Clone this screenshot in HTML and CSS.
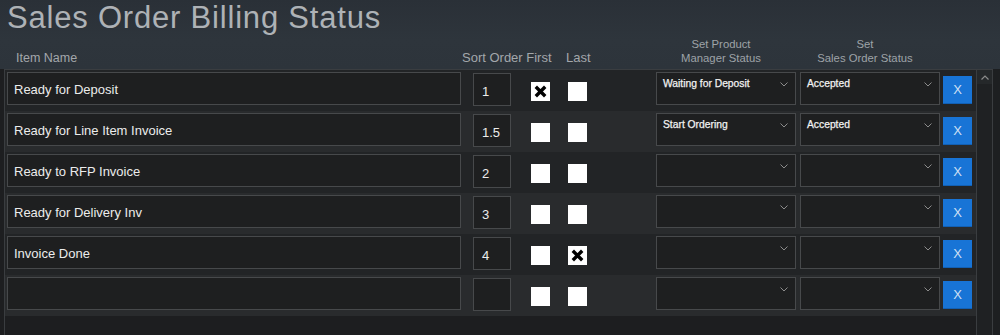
FILE: index.html
```html
<!DOCTYPE html>
<html>
<head>
<meta charset="utf-8">
<link rel="stylesheet" href="styles.css">
</head>
<body>
<div class="title">Sales Order Billing Status</div>
<div class="heads">
  <div class="h-name">Item Name</div>
  <div class="h-sort">Sort Order First</div>
  <div class="h-last">Last</div>
  <div class="h-sel">Set Product<br>Manager Status</div>
  <div class="h-sel h-sel2">Set<br>Sales Order Status</div>
</div>
<div class="panel">
  <div class="rows">
    <div class="row">
      <div class="name">Ready for Deposit</div>
      <div class="sort">1</div>
      <div class="cb cb-first checked"><svg viewBox="0 0 19 19" width="19" height="19"><path d="M6 6 L13 13 M13 6 L6 13" stroke="#000" stroke-width="3.4" stroke-linecap="square"/></svg></div>
      <div class="cb cb-last"></div>
      <div class="sel sel1"><span>Waiting for Deposit</span><svg class="chev" viewBox="0 0 8 5" width="8" height="5"><path d="M0.5 0.5 L4 4 L7.5 0.5" fill="none" stroke="#8c8c8c" stroke-width="1"/></svg></div>
      <div class="sel sel2"><span>Accepted</span><svg class="chev" viewBox="0 0 8 5" width="8" height="5"><path d="M0.5 0.5 L4 4 L7.5 0.5" fill="none" stroke="#8c8c8c" stroke-width="1"/></svg></div>
      <div class="xbtn">X</div>
    </div>
    <div class="row">
      <div class="name">Ready for Line Item Invoice</div>
      <div class="sort">1.5</div>
      <div class="cb cb-first"></div>
      <div class="cb cb-last"></div>
      <div class="sel sel1"><span>Start Ordering</span><svg class="chev" viewBox="0 0 8 5" width="8" height="5"><path d="M0.5 0.5 L4 4 L7.5 0.5" fill="none" stroke="#8c8c8c" stroke-width="1"/></svg></div>
      <div class="sel sel2"><span>Accepted</span><svg class="chev" viewBox="0 0 8 5" width="8" height="5"><path d="M0.5 0.5 L4 4 L7.5 0.5" fill="none" stroke="#8c8c8c" stroke-width="1"/></svg></div>
      <div class="xbtn">X</div>
    </div>
    <div class="row">
      <div class="name">Ready to RFP Invoice</div>
      <div class="sort">2</div>
      <div class="cb cb-first"></div>
      <div class="cb cb-last"></div>
      <div class="sel sel1"><span></span><svg class="chev" viewBox="0 0 8 5" width="8" height="5"><path d="M0.5 0.5 L4 4 L7.5 0.5" fill="none" stroke="#8c8c8c" stroke-width="1"/></svg></div>
      <div class="sel sel2"><span></span><svg class="chev" viewBox="0 0 8 5" width="8" height="5"><path d="M0.5 0.5 L4 4 L7.5 0.5" fill="none" stroke="#8c8c8c" stroke-width="1"/></svg></div>
      <div class="xbtn">X</div>
    </div>
    <div class="row">
      <div class="name">Ready for Delivery Inv</div>
      <div class="sort">3</div>
      <div class="cb cb-first"></div>
      <div class="cb cb-last"></div>
      <div class="sel sel1"><span></span><svg class="chev" viewBox="0 0 8 5" width="8" height="5"><path d="M0.5 0.5 L4 4 L7.5 0.5" fill="none" stroke="#8c8c8c" stroke-width="1"/></svg></div>
      <div class="sel sel2"><span></span><svg class="chev" viewBox="0 0 8 5" width="8" height="5"><path d="M0.5 0.5 L4 4 L7.5 0.5" fill="none" stroke="#8c8c8c" stroke-width="1"/></svg></div>
      <div class="xbtn">X</div>
    </div>
    <div class="row">
      <div class="name">Invoice Done</div>
      <div class="sort">4</div>
      <div class="cb cb-first"></div>
      <div class="cb cb-last checked"><svg viewBox="0 0 19 19" width="19" height="19"><path d="M6 6 L13 13 M13 6 L6 13" stroke="#000" stroke-width="3.4" stroke-linecap="square"/></svg></div>
      <div class="sel sel1"><span></span><svg class="chev" viewBox="0 0 8 5" width="8" height="5"><path d="M0.5 0.5 L4 4 L7.5 0.5" fill="none" stroke="#8c8c8c" stroke-width="1"/></svg></div>
      <div class="sel sel2"><span></span><svg class="chev" viewBox="0 0 8 5" width="8" height="5"><path d="M0.5 0.5 L4 4 L7.5 0.5" fill="none" stroke="#8c8c8c" stroke-width="1"/></svg></div>
      <div class="xbtn">X</div>
    </div>
    <div class="row">
      <div class="name"></div>
      <div class="sort"></div>
      <div class="cb cb-first"></div>
      <div class="cb cb-last"></div>
      <div class="sel sel1"><span></span><svg class="chev" viewBox="0 0 8 5" width="8" height="5"><path d="M0.5 0.5 L4 4 L7.5 0.5" fill="none" stroke="#8c8c8c" stroke-width="1"/></svg></div>
      <div class="sel sel2"><span></span><svg class="chev" viewBox="0 0 8 5" width="8" height="5"><path d="M0.5 0.5 L4 4 L7.5 0.5" fill="none" stroke="#8c8c8c" stroke-width="1"/></svg></div>
      <div class="xbtn">X</div>
    </div>
  </div>
  <div class="scrollbar">
    <div class="sb-up"><svg viewBox="0 0 8 5" width="8" height="5"><path d="M0.5 4.5 L4 1 L7.5 4.5" fill="none" stroke="#8c8c8c" stroke-width="1.2"/></svg></div>
  </div>
  <div class="edge"></div>
</div>
</body>
</html>
```
FILE: styles.css
```css
html, body {
  margin: 0;
  padding: 0;
  height: 100%;
}
body {
  width: 1000px;
  height: 335px;
  overflow: hidden;
  font-family: "Liberation Sans", Arial, sans-serif;
  background: linear-gradient(180deg, #2a3037 0px, #2e353c 40px, #2d343b 69px);
  color: #ddd;
}
.title {
  height: 34px;
  padding: 1px 0 0 7px;
  font-size: 31px;
  line-height: 34px;
  letter-spacing: 0.8px;
  color: #aeb2b6;
}
.heads {
  display: flex;
  align-items: flex-end;
  height: 30px;
  padding: 0 0 4px 0;
  font-size: 12.5px;
  line-height: 14px;
  color: #a3a7ab;
}
.h-name {
  width: 446px;
  padding-left: 16px;
}
.h-sort {
  width: 104px;
  font-size: 13px;
}
.h-last {
  width: 85px;
  font-size: 13px;
}
.h-sel {
  width: 140px;
  text-align: center;
  font-size: 11.3px;
  line-height: 14px;
  color: #9ea3a8;
}
.h-sel2 {
  margin-left: 4px;
}
.panel {
  display: flex;
  height: 266px;
  background: #1d1e20;
}
.rows {
  width: 971px;
  margin-left: 4px;
  border-left: 1px solid #3a3d40;
  border-top: 1px solid #3a3d40;
}
.row {
  display: flex;
  align-items: flex-start;
  height: 41px;
  padding-left: 2px;
  background: #222426;
}
.row:nth-child(even) {
  background: #292b2d;
}
.name {
  box-sizing: border-box;
  width: 454px;
  height: 33px;
  margin-top: 2px;
  padding: 2px 0 0 6px;
  border: 1px solid #47494b;
  background: #1e1f20;
  font-size: 13px;
  line-height: 30px;
  color: #ececec;
}
.sort {
  box-sizing: border-box;
  width: 38px;
  height: 33px;
  margin-top: 3px;
  margin-left: 12px;
  padding: 2px 0 0 8px;
  border: 1px solid #47494b;
  background: #1e1f20;
  font-size: 13px;
  line-height: 31px;
  color: #ececec;
}
.cb {
  width: 19px;
  height: 19px;
  margin-top: 12px;
  background: #fff;
}
.cb svg {
  display: block;
}
.cb-first {
  margin-left: 20px;
}
.cb-last {
  margin-left: 18px;
}
.sel {
  box-sizing: border-box;
  display: flex;
  align-items: flex-start;
  width: 140px;
  height: 33px;
  margin-top: 2px;
  padding: 5px 6px 0 6px;
  border: 1px solid #47494b;
  background: #1e1f20;
  font-size: 10.3px;
  line-height: 12px;
  color: #f2f2f2;
  -webkit-text-stroke: 0.25px #f2f2f2;
}
.sel1 {
  margin-left: 69px;
}
.sel2 {
  margin-left: 4px;
}
.chev {
  margin-left: auto;
  margin-top: 4px;
  margin-right: 1px;
}
.xbtn {
  width: 29px;
  height: 27px;
  margin-top: 6px;
  margin-left: 3px;
  background: #1874d6;
  border-bottom: 1px solid #1260b4;
  color: #cfe0f4;
  font-size: 13px;
  line-height: 27px;
  text-align: center;
}
.scrollbar {
  box-sizing: border-box;
  width: 17px;
  border-top: 1px solid #3a3d40;
  border-left: 1px solid #3a3d40;
  border-right: 1px solid #3a3d40;
  background: #1f2123;
}
.sb-up {
  display: flex;
  justify-content: center;
  align-items: center;
  height: 14px;
  background: #25282a;
}
.sb-up svg {
  display: block;
}
.edge {
  flex: 1;
  background: #1d1f21;
}
```
